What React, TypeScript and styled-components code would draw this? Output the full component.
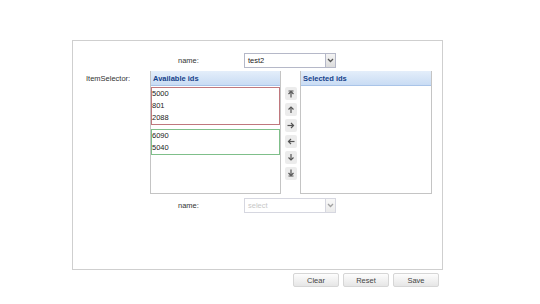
import React from "react";
import styled, { createGlobalStyle } from "styled-components";

const Global = createGlobalStyle`
  html, body { margin: 0; padding: 0; background: #ffffff; }
  body { font-family: "Liberation Sans", Arial, sans-serif; font-size: 7.5px; color: #222; }
  * { box-sizing: border-box; }
`;

const Page = styled.div`
  width: 540px;
  height: 304px;
  padding: 40px 0 0 72px;
  display: flex;
  flex-direction: column;
`;

const Frame = styled.div`
  width: 371px;
  height: 230px;
  border: 1px solid #cfcfcf;
  display: flex;
  flex-direction: column;
  padding-top: 12px;
`;

const FieldRow = styled.div<{ $indent: number; $top?: number }>`
  display: flex;
  align-items: center;
  padding-left: ${(p) => p.$indent}px;
  margin-top: ${(p) => p.$top ?? 0}px;
`;

const Label = styled.div<{ $width: number }>`
  width: ${(p) => p.$width}px;
  flex: none;
  color: #333;
  font-size: 7.5px;
`;

const Combo = styled.div<{ $disabled?: boolean }>`
  display: flex;
  width: 92px;
  height: 15px;
  opacity: ${(p) => (p.$disabled ? 0.55 : 1)};
`;

const ComboInput = styled.div<{ $placeholder?: boolean }>`
  flex: 1;
  border: 1px solid #b5b8c8;
  border-right: none;
  background: #fff;
  padding: 0 3px;
  display: flex;
  align-items: center;
  color: ${(p) => (p.$placeholder ? "#999" : "#222")};
  font-size: 7.5px;
`;

const Trigger = styled.div`
  width: 11px;
  border: 1px solid #b5b8c8;
  background: linear-gradient(#f4f4f4, #dcdcdc);
  display: flex;
  align-items: center;
  justify-content: center;
`;

const SelectorRow = styled.div`
  display: flex;
  align-items: flex-start;
  padding-left: 13px;
  margin-top: 3px;
`;

const SelectorLabel = styled.div`
  width: 64px;
  flex: none;
  padding-top: 3px;
  color: #333;
  font-size: 7.5px;
`;

const Panel = styled.div<{ $width: number }>`
  width: ${(p) => p.$width}px;
  height: 123px;
  display: flex;
  flex-direction: column;
  border: 1px solid #c4c4c4;
  border-top: none;
`;

const PanelHeader = styled.div`
  height: 15px;
  flex: none;
  background: linear-gradient(#e4eefa, #c9dcf4);
  border-bottom: 1px solid #a9c4e8;
  color: #15428b;
  font-weight: bold;
  font-size: 7.5px;
  display: flex;
  align-items: center;
  padding-left: 2px;
`;

const PanelBody = styled.div`
  flex: 1;
  background: #fff;
  display: flex;
  flex-direction: column;
  gap: 4px;
  padding-top: 1px;
`;

const Group = styled.div<{ $color: string }>`
  border: 1px solid ${(p) => p.$color};
  display: flex;
  flex-direction: column;
`;

const Item = styled.div`
  height: 12px;
  line-height: 12px;
  padding-left: 0px;
  color: #222;
  font-size: 7.5px;
`;

const ButtonColumn = styled.div`
  width: 19px;
  flex: none;
  display: flex;
  flex-direction: column;
  align-items: center;
  gap: 3px;
  padding-top: 16px;
`;

const ArrowButton = styled.div`
  width: 12px;
  height: 13px;
  background: #ececec;
  border-radius: 2px;
  display: flex;
  align-items: center;
  justify-content: center;
`;

const Footer = styled.div`
  width: 371px;
  display: flex;
  justify-content: flex-end;
  gap: 4px;
  padding-right: 4px;
  margin-top: 3px;
`;

const FootButton = styled.div`
  width: 46px;
  height: 14px;
  border: 1px solid #d6d6d6;
  border-radius: 2px;
  background: linear-gradient(#fdfdfd, #e6e6e6);
  color: #444;
  font-size: 7.5px;
  display: flex;
  align-items: center;
  justify-content: center;
`;

const Chevron = () => (
  <svg width="7" height="5" viewBox="0 0 7 5">
    <path d="M1 1 L3.5 3.5 L6 1" stroke="#555" strokeWidth="1.3" fill="none" />
  </svg>
);

type Dir = "top" | "up" | "right" | "left" | "down" | "bottom";

const Arrow = ({ dir }: { dir: Dir }) => {
  const c = "#555";
  const base = (
    <g>
      <path d="M4 2 L4 8" stroke={c} strokeWidth="1.2" />
      <path d="M1.5 4.5 L4 2 L6.5 4.5" stroke={c} strokeWidth="1.2" fill="none" />
    </g>
  );
  let rot = 0;
  if (dir === "right") rot = 90;
  if (dir === "left") rot = -90;
  if (dir === "down" || dir === "bottom") rot = 180;
  const dbl = dir === "top" || dir === "bottom";
  return (
    <svg width="8" height="9" viewBox="0 0 8 9">
      <g transform={`rotate(${rot} 4 4.5)`}>
        {dbl && <path d="M1.5 2 L6.5 2" stroke={c} strokeWidth="1" />}
        <g transform={dbl ? "translate(0 0.5)" : ""}>{base}</g>
      </g>
    </svg>
  );
};

export default function App() {
  const dirs: Dir[] = ["top", "up", "right", "left", "down", "bottom"];
  return (
    <>
      <Global />
      <Page>
        <Frame>
          <FieldRow $indent={105}>
            <Label $width={66}>name:</Label>
            <Combo>
              <ComboInput>test2</ComboInput>
              <Trigger>
                <Chevron />
              </Trigger>
            </Combo>
          </FieldRow>
          <SelectorRow>
            <SelectorLabel>ItemSelector:</SelectorLabel>
            <Panel $width={131}>
              <PanelHeader>Available ids</PanelHeader>
              <PanelBody>
                <Group $color="#c0787e">
                  <Item>5000</Item>
                  <Item>801</Item>
                  <Item>2088</Item>
                </Group>
                <Group $color="#7fbf8a">
                  <Item>6090</Item>
                  <Item>5040</Item>
                </Group>
              </PanelBody>
            </Panel>
            <ButtonColumn>
              {dirs.map((d) => (
                <ArrowButton key={d}>
                  <Arrow dir={d} />
                </ArrowButton>
              ))}
            </ButtonColumn>
            <Panel $width={132}>
              <PanelHeader>Selected ids</PanelHeader>
              <PanelBody />
            </Panel>
          </SelectorRow>
          <FieldRow $indent={105} $top={4}>
            <Label $width={66}>name:</Label>
            <Combo $disabled>
              <ComboInput $placeholder>select</ComboInput>
              <Trigger>
                <Chevron />
              </Trigger>
            </Combo>
          </FieldRow>
        </Frame>
        <Footer>
          <FootButton>Clear</FootButton>
          <FootButton>Reset</FootButton>
          <FootButton>Save</FootButton>
        </Footer>
      </Page>
    </>
  );
}
